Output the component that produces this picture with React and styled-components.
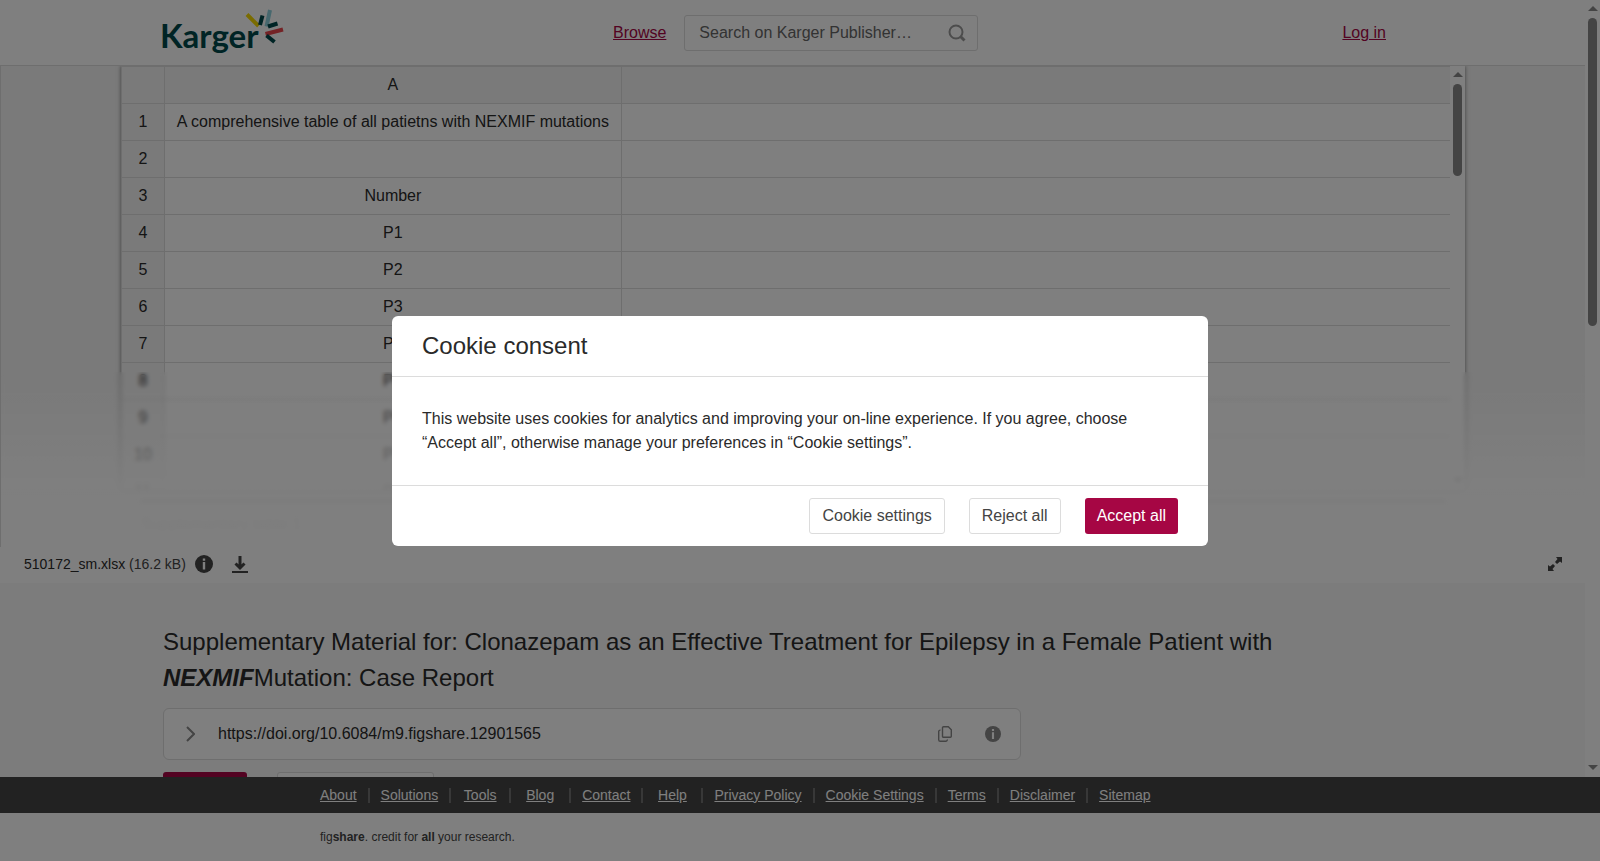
import React from 'react';
import styled, { createGlobalStyle } from 'styled-components';

const sheetRows = [
  'A comprehensive table of all patietns with NEXMIF mutations',
  '',
  'Number',
  'P1',
  'P2',
  'P3',
  'P4',
  'P5',
  'P6',
  'P7',
  'P8',
];

const footerLinks = [
  'About',
  'Solutions',
  'Tools',
  'Blog',
  'Contact',
  'Help',
  'Privacy Policy',
  'Cookie Settings',
  'Terms',
  'Disclaimer',
  'Sitemap',
];

const Logo = () => (
  <svg width="125" height="60" viewBox="-3 0 125 60" role="img" aria-label="Karger">
    <text x="-3" y="45" fontFamily="Lato, sans-serif" fontSize="33" fontWeight="700" fill="#00484a">
      Karger
    </text>
    <g fill="none" strokeWidth="4">
      <path d="M84 11.500 95.500 23" stroke="#f5d800" />
      <path d="M99.500 12.500 97 22" stroke="#00484a" />
      <path d="M107 7 103.500 23.500" stroke="#8fd0dc" />
      <path d="M105 23.500 114.500 20.500" stroke="#00484a" />
      <path d="M102.500 31 120 26.500" stroke="#e8474c" />
      <path d="M103.500 32.500 111.500 39" stroke="#00484a" />
    </g>
  </svg>
);

const SearchIcon = () => (
  <svg width="18" height="18" viewBox="0 0 18 18" fill="none" stroke="#999" strokeWidth="2">
    <circle cx="8" cy="8" r="6.500" />
    <path d="m12.500 12.500 4 4" strokeWidth="3" />
  </svg>
);

const InfoIcon = ({ size, color }) => (
  <svg width={size} height={size} viewBox="0 0 18 18">
    <circle cx="9" cy="9" r="9" fill={color} />
    <path d="M7.800 3.500h2.400v2.200H7.800zM7.800 7h2.400v7.500H7.800z" fill="#fff" />
  </svg>
);

const DownloadIcon = () => (
  <svg width="16" height="18" viewBox="0 0 16 18" fill="none" stroke="#444">
    <path d="M8 1v11M3.500 8.500 8 13l4.500-4.500" strokeWidth="3" />
    <path d="M0 17h16" strokeWidth="2" />
  </svg>
);

const ExpandIcon = () => (
  <svg width="14" height="14" viewBox="0 0 14 14" fill="#444">
    <path d="M8 0h6v6l-2-1.500L9 7 7 5l2.500-3z" />
    <path d="M6 14H0V8l2 1.500L5 7l2 2-2.500 3z" />
  </svg>
);

const ChevronIcon = () => (
  <svg width="9" height="16" viewBox="0 0 9 16" fill="none" stroke="#888" strokeWidth="2">
    <path d="m1 1 7 7-7 7" />
  </svg>
);

const CopyIcon = () => (
  <svg width="14" height="16" viewBox="0 0 14 16" fill="none" stroke="#888">
    <path d="M5.500.7h4.800l3 3v6.600a1 1 0 0 1-1 1H5.500a1 1 0 0 1-1-1V1.700a1 1 0 0 1 1-1z" strokeWidth="1.400" />
    <path d="M2.500 4.200A1.500 1.500 0 0 0 .7 5.700v8a1.600 1.600 0 0 0 1.600 1.600h5.400a1.500 1.500 0 0 0 1.500-1.800" strokeWidth="1.400" />
  </svg>
);

const Scrollbar = ({ thumb }) => (
  <ScrollTrack aria-hidden="true">
    <ScrollArrow />
    <ScrollThumb $height={thumb} />
    <ScrollArrow $down />
  </ScrollTrack>
);

const Header = () => (
  <HeaderBar>
    <HomeLink href="#home">
      <Logo />
    </HomeLink>
    <HeaderNav>
      <HeaderLink href="#browse">Browse</HeaderLink>
      <SearchForm onSubmit={e => e.preventDefault()}>
        <SearchInput
          type="text"
          aria-label="Search"
          placeholder="Search on Karger Publisher…"
        />
        <IconButton aria-label="Submit search">
          <SearchIcon />
        </IconButton>
      </SearchForm>
    </HeaderNav>
    <HeaderLink href="#login">Log in</HeaderLink>
  </HeaderBar>
);

const Viewer = () => (
  <ViewerArea>
    <Sheet>
      <SheetScroll>
        <SheetTable>
          <thead>
            <tr>
              <HeadCell />
              <HeadCell scope="col">A</HeadCell>
              <HeadCell $fill />
            </tr>
          </thead>
          <tbody>
            {sheetRows.map((value, index) => (
              <tr key={index}>
                <HeadCell scope="row">{index + 1}</HeadCell>
                <Cell>{value}</Cell>
                <Cell $fill />
              </tr>
            ))}
          </tbody>
        </SheetTable>
      </SheetScroll>
      <Scrollbar thumb={92} />
    </Sheet>
    <SheetTabs>Supplementary table 1</SheetTabs>
    <ViewerFade />
  </ViewerArea>
);

const CookieDialog = () => (
  <Overlay>
    <Dialog role="dialog" aria-modal="true" aria-labelledby="cookie-title">
      <DialogHeader>
        <DialogTitle id="cookie-title">Cookie consent</DialogTitle>
      </DialogHeader>
      <DialogBody>
        This website uses cookies for analytics and improving your on-line
        experience. If you agree, choose “Accept all”, otherwise manage your
        preferences in “Cookie settings”.
      </DialogBody>
      <DialogFooter>
        <Button>Cookie settings</Button>
        <Button>Reject all</Button>
        <Button $primary>Accept all</Button>
      </DialogFooter>
    </Dialog>
  </Overlay>
);

const App = () => {
  return (
    <>
      <GlobalStyle />
      <Page>
        <Main>
          <Content>
            <Header />
            <Viewer />
            <FileBar>
              <FileName>
                510172_sm.xlsx <FileSize>(16.2 kB)</FileSize>
              </FileName>
              <IconButton aria-label="File information">
                <InfoIcon size={18} color="#444" />
              </IconButton>
              <IconButton aria-label="Download file">
                <DownloadIcon />
              </IconButton>
              <ExpandButton aria-label="Enter fullscreen">
                <ExpandIcon />
              </ExpandButton>
            </FileBar>
            <Article>
              <Title>
                Supplementary Material for: Clonazepam as an Effective Treatment
                for Epilepsy in a Female Patient with{' '}
                <TitleEmphasis>NEXMIF</TitleEmphasis>Mutation: Case Report
              </Title>
              <DoiBox>
                <IconButton aria-label="Show versions">
                  <ChevronIcon />
                </IconButton>
                <DoiText>https://doi.org/10.6084/m9.figshare.12901565</DoiText>
                <IconButton aria-label="Copy DOI">
                  <CopyIcon />
                </IconButton>
                <IconButton aria-label="About DOI">
                  <InfoIcon size={16} color="#888" />
                </IconButton>
              </DoiBox>
              <Actions>
                <ActionButton $primary $width={84} aria-label="Cite" />
                <ActionButton $width={157} aria-label="Download all" />
              </Actions>
            </Article>
          </Content>
          <Scrollbar thumb={308} />
        </Main>
        <LinksBar>
          <LinksList>
            {footerLinks.map(name => (
              <LinksItem key={name}>
                <FooterLink href="#footer">{name}</FooterLink>
              </LinksItem>
            ))}
          </LinksList>
        </LinksBar>
        <Credit>
          <CreditText>
            fig<b>share</b>. credit for <b>all</b> your research.
          </CreditText>
        </Credit>
      </Page>
      <CookieDialog />
    </>
  );
};

export default App;

const GlobalStyle = createGlobalStyle`
  * {
    box-sizing: border-box;
  }

  body {
    margin: 0;
    color: #2a2a2a;
    font-family: 'Liberation Sans', Arial, sans-serif;
    font-size: 16px;
    line-height: 24px;
  }

  button,
  input {
    font: inherit;
  }

  svg {
    display: block;
  }
`;

const Page = styled.div`
  display: flex;
  flex-direction: column;

  height: 100vh;
  background-color: #fff;
`;

const Main = styled.main`
  display: flex;
  flex: 1;

  min-height: 0;
`;

const Content = styled.div`
  flex: 1;

  min-width: 0;
  overflow: hidden;
  background-color: #f8f8f8;
`;

const ScrollTrack = styled.div`
  display: flex;
  flex-direction: column;
  align-items: center;

  width: 15px;
  padding: 6px 0 7px;
  background-color: #fff;
`;

const ScrollArrow = styled.span`
  border: solid transparent;
  border-width: 0 5px 5px;
  border-bottom-color: #888;
  ${({ $down }) => $down && 'margin-top: auto; transform: rotate(180deg);'}
`;

const ScrollThumb = styled.span`
  width: 9px;
  height: ${({ $height }) => $height}px;
  margin-top: 7px;
  border-radius: 5px;
  background-color: #888;
`;

const IconButton = styled.button`
  padding: 0;
  border-style: none;
  background-color: transparent;

  &:hover {
    cursor: pointer;
  }
`;

const HeaderBar = styled.header`
  display: flex;
  align-items: center;

  height: 66px;
  padding: 0 199px 0 160px;
  border-bottom: 1px solid #dcdcdc;
  background-color: #fff;
`;

const HomeLink = styled.a`
  width: 453px;
`;

const HeaderNav = styled.nav`
  display: flex;
  flex: 1;
  align-items: center;
  gap: 18px;
`;

const HeaderLink = styled.a`
  color: #a60644;
`;

const SearchForm = styled.form`
  display: flex;
  align-items: center;

  width: 294px;
  height: 36px;
  padding: 0 11px 0 14px;
  border: 1px solid #dcdcdc;
  border-radius: 3px;
`;

const SearchInput = styled.input`
  flex: 1;

  min-width: 0;
  padding: 0;
  border-style: none;
  outline: none;
  background-color: transparent;

  &::placeholder {
    color: #666;
    opacity: 1;
  }
`;

const ViewerArea = styled.section`
  position: relative;

  height: 481px;
  padding: 0 120px;
  overflow: hidden;
  border-left: 1px solid #dcdcdc;
  background-color: #f4f4f4;
`;

const Sheet = styled.div`
  display: flex;

  height: 424px;
  background-color: #fff;
  box-shadow: 0 0 4px rgba(0, 0, 0, 0.5);
`;

const SheetScroll = styled.div`
  flex: 1;

  overflow: hidden;
  border-top: 1px solid #dcdcdc;
  border-left: 1px solid #dcdcdc;
`;

const SheetTable = styled.table`
  width: 100%;
  border-spacing: 0;
  white-space: nowrap;
`;

const Cell = styled.td`
  width: ${({ $fill }) => ($fill ? '100%' : 'auto')};
  height: 37px;
  padding: 0 12px;
  border-right: ${({ $fill }) => ($fill ? '0' : '1px')} solid #dcdcdc;
  border-bottom: 1px solid #dcdcdc;
  text-align: center;
`;

const HeadCell = styled(Cell).attrs({ as: 'th' })`
  background-color: #f4f4f4;
  font-weight: 400;
`;

const SheetTabs = styled.div`
  height: 57px;
  margin: 10px 20px 0;
  padding: 10px 0;
  border-top: 3px solid #777;
  background-color: #fff;
`;

const ViewerFade = styled.div`
  position: absolute;
  right: 0;
  bottom: 0;
  left: 0;

  height: 175px;
  background-image: linear-gradient(
    rgba(255, 255, 255, 0),
    rgba(255, 255, 255, 0.9) 65%,
    #fff
  );
  backdrop-filter: blur(2px);
`;

const FileBar = styled.div`
  display: flex;
  align-items: center;

  height: 36px;
  padding: 0 23px 2px 24px;
  background-color: #fff;
  font-size: 14px;
`;

const FileName = styled.span`
  margin-right: 9px;

  & + button {
    margin-right: 19px;
  }
`;

const FileSize = styled.span`
  color: #444;
`;

const ExpandButton = styled(IconButton)`
  margin-left: auto;
`;

const Article = styled.article`
  padding: 41px 163px 0;
`;

const Title = styled.h1`
  margin: 0 0 12px;
  font-size: 24px;
  font-weight: 400;
  line-height: 36px;
`;

const TitleEmphasis = styled.em`
  font-weight: 700;
`;

const DoiBox = styled.div`
  display: flex;
  align-items: center;

  max-width: 858px;
  height: 52px;
  padding: 0 19px 0 22px;
  border: 1px solid #dcdcdc;
  border-radius: 6px;
  background-color: #fff;

  button:last-child {
    margin-left: 33px;
  }
`;

const DoiText = styled.span`
  flex: 1;

  margin-left: 23px;
`;

const Actions = styled.div`
  display: flex;
  gap: 30px;

  margin-top: 12px;
`;

const Button = styled.button`
  height: 36px;
  padding: 0 12px;

  border: ${({ $primary }) => ($primary ? '0' : '1px')} solid #dcdcdc;
  border-radius: 3px;
  color: ${({ $primary }) => ($primary ? '#fff' : '#444')};
  background-color: ${({ $primary }) => ($primary ? '#a60644' : '#fff')};
  white-space: nowrap;

  &:hover {
    cursor: pointer;
  }
`;

const ActionButton = styled(Button)`
  width: ${({ $width }) => $width}px;
`;

const LinksBar = styled.nav`
  display: flex;
  align-items: center;

  height: 36px;
  background-color: #444;
`;

const LinksList = styled.ul`
  display: flex;

  width: 100%;
  max-width: 960px;
  margin: 0 auto;
  padding: 0;
  list-style: none;
`;

const LinksItem = styled.li`
  min-width: 60px;
  padding: 0 11px;
  border-right: 2px solid #707070;
  font-size: 14px;
  line-height: 15px;
  text-align: center;
  white-space: nowrap;

  &:first-child {
    min-width: 0;
    padding-left: 0;
  }

  &:last-child {
    border-right: 0;
  }
`;

const FooterLink = styled.a`
  color: #fff;
`;

const Credit = styled.footer`
  display: flex;
  align-items: center;

  height: 48px;
`;

const CreditText = styled.p`
  width: 100%;
  max-width: 960px;
  margin: 0 auto;
  color: #444;
  font-size: 12px;
`;

const Overlay = styled.div`
  position: fixed;
  inset: 0;

  display: flex;
  justify-content: center;
  align-items: center;

  padding-top: 1px;
  background-color: rgba(0, 0, 0, 0.5);
`;

const Dialog = styled.div`
  width: 816px;
  max-width: 100%;
  border-radius: 6px;
  background-color: #fff;
`;

const DialogHeader = styled.div`
  padding: 12px 30px;
  border-bottom: 1px solid #dcdcdc;
`;

const DialogTitle = styled.h2`
  margin: 0;
  font-size: 24px;
  font-weight: 400;
  line-height: 36px;
`;

const DialogBody = styled.div`
  padding: 30px;
`;

const DialogFooter = styled.div`
  display: flex;
  justify-content: flex-end;
  gap: 24px;

  padding: 12px 30px;
  border-top: 1px solid #dcdcdc;
`;
